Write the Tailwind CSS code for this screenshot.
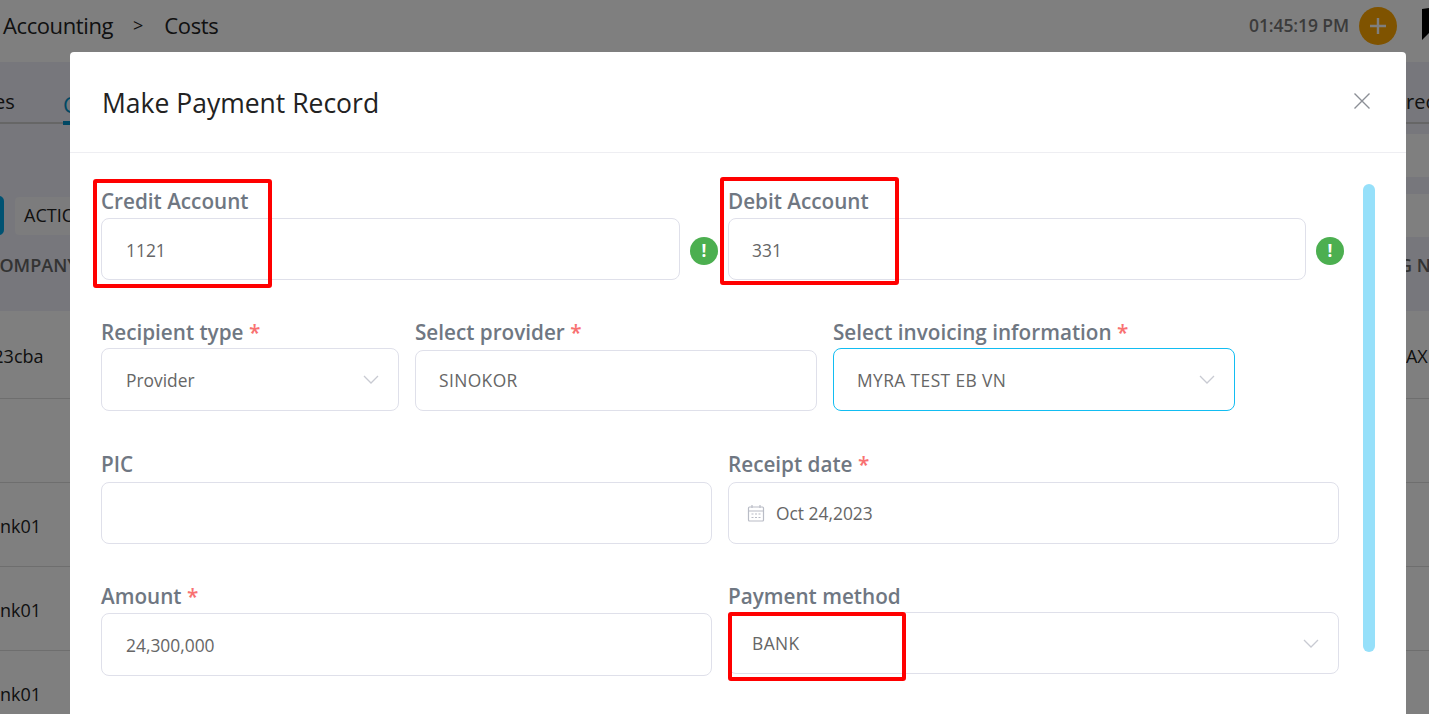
<!DOCTYPE html>
<html lang="en">
  <head>
    <meta charset="UTF-8" />
    <title>Costs</title>
    <script src="https://cdn.jsdelivr.net/npm/@tailwindcss/browser@4"></script>
  </head>
  <body class="relative h-[714px] w-[1429px] overflow-hidden bg-[#eeeef8] font-['Open_Sans',sans-serif]">
    <!-- page behind the modal -->
    <header class="flex h-[62px] items-center bg-white pb-[12px] pl-[3px] pr-[32px] text-[#222]">
      <span class="text-[22px] tracking-[-0.4px]">Accounting</span>
      <span class="ml-[20px] text-[18px]">&gt;</span>
      <span class="ml-[21px] text-[22px] tracking-[-0.4px]">Costs</span>
      <span class="ml-auto mr-[10px] text-[17.5px] font-semibold tracking-[-0.1px] text-[#777]">01:45:19 PM</span>
      <span class="mt-[2px] flex h-[38px] w-[38px] items-center justify-center rounded-full bg-[#ffa600]">
        <svg class="h-[20px] w-[20px]" viewBox="0 0 20 20" fill="none" stroke="#fff" stroke-width="2.4"><path d="M10 2v16M2 10h16" /></svg>
      </span>
    </header>
    <svg class="absolute left-[1422px] top-[8px] h-[32px] w-[7px]" viewBox="0 0 7 32"><path d="M0 1L7 0V25L0 32Z" fill="#000" /></svg>

    <div class="flex h-[62px] items-end justify-between border-b-2 border-[#ccc] pb-[5px] text-[20px] text-[#222]">
      <span class="-ml-[6px] font-medium">es</span>
      <span class="absolute left-[63px] top-[62px] h-[63px] w-[40px] border-b-[4px] border-[#0091c8] pt-[26px] text-[22px] text-[#0091c8]">Costs</span>
      <span class="mr-[-6px] font-medium">rec</span>
    </div>
    <div class="mt-[10px] ml-[1300px] h-[43px] bg-white"></div>
    <div class="h-[17px]"></div>
    <div class="flex h-[43px] items-center gap-[11px]">
      <span class="-ml-[30px] h-[39px] w-[34px] rounded-[5px] bg-[#00a5e5]"></span>
      <span class="flex h-[38px] w-[100px] items-center rounded-[4px] bg-[#f8f8fa] pl-[9px] text-[18px] text-[#222]">ACTION</span>
      <span class="ml-auto h-[43px] w-[40px] bg-white"></span>
    </div>
    <div class="flex h-[74px] items-center justify-between pb-[17px] text-[18px] font-semibold text-[#666]">
      <span class="-ml-[12px]">COMPANY</span>
      <span class="mr-[-16px]">G NO</span>
    </div>
    <div class="flex h-[88px] items-center justify-between border-b border-[#ddd] bg-white pt-[3px] text-[18px] text-[#222]">
      <span class="-ml-[17px]">123cba</span><span class="mr-[-9px]">AX1</span>
    </div>
    <div class="h-[84px] border-b border-[#ddd] bg-white"></div>
    <div class="flex h-[84px] items-center border-b border-[#ddd] bg-white pt-[3px] text-[18px] text-[#222]"><span class="-ml-[21px]">bank01</span></div>
    <div class="flex h-[84px] items-center border-b border-[#ddd] bg-white pt-[3px] text-[18px] text-[#222]"><span class="-ml-[21px]">bank01</span></div>
    <div class="flex h-[84px] items-center bg-white pt-[3px] text-[18px] text-[#222]"><span class="-ml-[21px]">bank01</span></div>

    <!-- overlay + modal -->
    <div class="absolute inset-0 bg-black/50">
      <div class="relative ml-[70px] mt-[52px] h-[662px] w-[1336px] rounded-t-[4px] bg-white">
        <div class="flex h-[101px] items-center justify-between border-b border-[#eeeef2] pl-[32px] pr-[35px] pt-[2px]">
          <h2 class="text-[26.5px] leading-none text-[#222]">Make Payment Record</h2>
          <svg class="mb-[5px] h-[18px] w-[18px]" viewBox="0 0 18 18" fill="none" stroke="#8c8f96" stroke-width="1.4"><path d="M1.5 1.5l15 15M16.5 1.5l-15 15" /></svg>
        </div>

        <form class="pl-[31px] pt-[35px]">
          <div class="flex">
            <div class="w-[579px]">
              <label class="block h-[30px] text-[20.7px] font-semibold leading-[27px] text-[#6f7782]">Credit Account</label>
              <div class="flex h-[62px] items-center rounded-[8px] border border-[#dfe0ea] pl-[24px] pt-[2px] text-[17.4px] text-[#666]">1121</div>
            </div>
            <span class="ml-[10px] mt-[49px] flex h-[28px] w-[28px] items-center justify-center rounded-full bg-[#4caf50] text-[17px] font-bold text-white">!</span>
            <div class="ml-[10px] w-[578px]">
              <label class="block h-[30px] text-[20.7px] font-semibold leading-[27px] text-[#6f7782]">Debit Account</label>
              <div class="flex h-[62px] items-center rounded-[8px] border border-[#dfe0ea] pl-[23px] pt-[2px] text-[17.4px] text-[#666]">331</div>
            </div>
            <span class="ml-[10px] mt-[49px] flex h-[28px] w-[28px] items-center justify-center rounded-full bg-[#4caf50] text-[17px] font-bold text-white">!</span>
          </div>

          <div class="mt-[38px] flex items-start gap-[16px]">
            <div class="w-[298px]">
              <label class="block h-[30px] text-[20.7px] font-semibold leading-[29px] text-[#6f7782]">Recipient type <span class="text-[#f87171]">*</span></label>
              <div class="flex h-[63px] items-center justify-between rounded-[8px] border border-[#dfe0ea] pl-[24px] pr-[19px] pt-[2px] text-[17.4px] text-[#666]">
                Provider
                <svg class="mb-[2px] h-[9px] w-[16px]" viewBox="0 0 16 9" fill="none" stroke="#c8cad2" stroke-width="1.3"><path d="M1 1l7 7 7-7" /></svg>
              </div>
            </div>
            <div class="w-[402px]">
              <label class="block h-[32px] text-[20.7px] font-semibold leading-[29px] text-[#6f7782]">Select provider <span class="text-[#f87171]">*</span></label>
              <div class="flex h-[61px] items-center rounded-[8px] border border-[#dfe0ea] pl-[23px] text-[17.4px] tracking-[0.4px] text-[#666]">SINOKOR</div>
            </div>
            <div class="w-[402px]">
              <label class="block h-[30px] text-[20.7px] font-semibold leading-[29px] text-[#6f7782]">Select invoicing information <span class="text-[#f87171]">*</span></label>
              <div class="flex h-[63px] items-center justify-between rounded-[8px] border border-[#12bdf2] pl-[23px] pr-[19px] pt-[2px] text-[17.4px] tracking-[0.4px] text-[#666]">
                MYRA TEST EB VN
                <svg class="mb-[2px] h-[9px] w-[16px]" viewBox="0 0 16 9" fill="none" stroke="#c8cad2" stroke-width="1.3"><path d="M1 1l7 7 7-7" /></svg>
              </div>
            </div>
          </div>

          <div class="mt-[41px] grid w-[1238px] grid-cols-2 gap-x-[16px]">
            <div>
              <label class="block h-[30px] text-[20.7px] font-semibold leading-[24px] text-[#6f7782]">PIC</label>
              <div class="h-[62px] rounded-[8px] border border-[#dfe0ea]"></div>
            </div>
            <div>
              <label class="block h-[30px] text-[20.7px] font-semibold leading-[24px] text-[#6f7782]">Receipt date <span class="text-[#f87171]">*</span></label>
              <div class="flex h-[62px] items-center gap-[11px] rounded-[8px] border border-[#dfe0ea] pl-[18px] text-[17.4px] text-[#666]">
                <svg class="h-[18px] w-[18px]" viewBox="0 0 18 18" fill="none" stroke="#b9bcc6" stroke-width="1.2">
                  <rect x="1.5" y="3" width="15" height="14" rx="1" />
                  <path d="M1.5 7h15M5 1v3M13 1v3" />
                  <path d="M4.5 10h2M8 10h2M11.5 10h2M4.5 13.5h2M8 13.5h2M11.5 13.5h2" />
                </svg>
                Oct 24,2023
              </div>
            </div>
          </div>

          <div class="mt-[38px] grid w-[1238px] grid-cols-2 gap-x-[16px]">
            <div>
              <label class="block h-[31px] text-[20.7px] font-semibold leading-[28px] text-[#6f7782]">Amount <span class="text-[#f87171]">*</span></label>
              <div class="flex h-[63px] items-center rounded-[8px] border border-[#dfe0ea] pl-[24px] pt-[2px] text-[17.4px] text-[#666]">24,300,000</div>
            </div>
            <div>
              <label class="block h-[30px] text-[20.7px] font-semibold leading-[28px] text-[#6f7782]">Payment method</label>
              <div class="flex h-[62px] items-center justify-between rounded-[8px] border border-[#dfe0ea] pl-[23px] pr-[19px] text-[17.4px] tracking-[0.4px] text-[#666]">
                BANK
                <svg class="h-[9px] w-[16px]" viewBox="0 0 16 9" fill="none" stroke="#c8cad2" stroke-width="1.3"><path d="M1 1l7 7 7-7" /></svg>
              </div>
            </div>
          </div>
        </form>

        <!-- scrollbar thumb -->
        <div class="absolute left-[1293px] top-[132px] h-[468px] w-[12px] rounded-[6px] bg-[#96e0fa]"></div>

        <!-- red annotation boxes -->
        <div class="absolute left-[23px] top-[127px] h-[109px] w-[179px] rounded-[3px] border-[4px] border-[#ff0000]"></div>
        <div class="absolute left-[650px] top-[125px] h-[108px] w-[179px] rounded-[3px] border-[4px] border-[#ff0000]"></div>
        <div class="absolute left-[658px] top-[560px] h-[69px] w-[178px] rounded-[3px] border-[4px] border-[#ff0000]"></div>
      </div>
    </div>
  </body>
</html>
